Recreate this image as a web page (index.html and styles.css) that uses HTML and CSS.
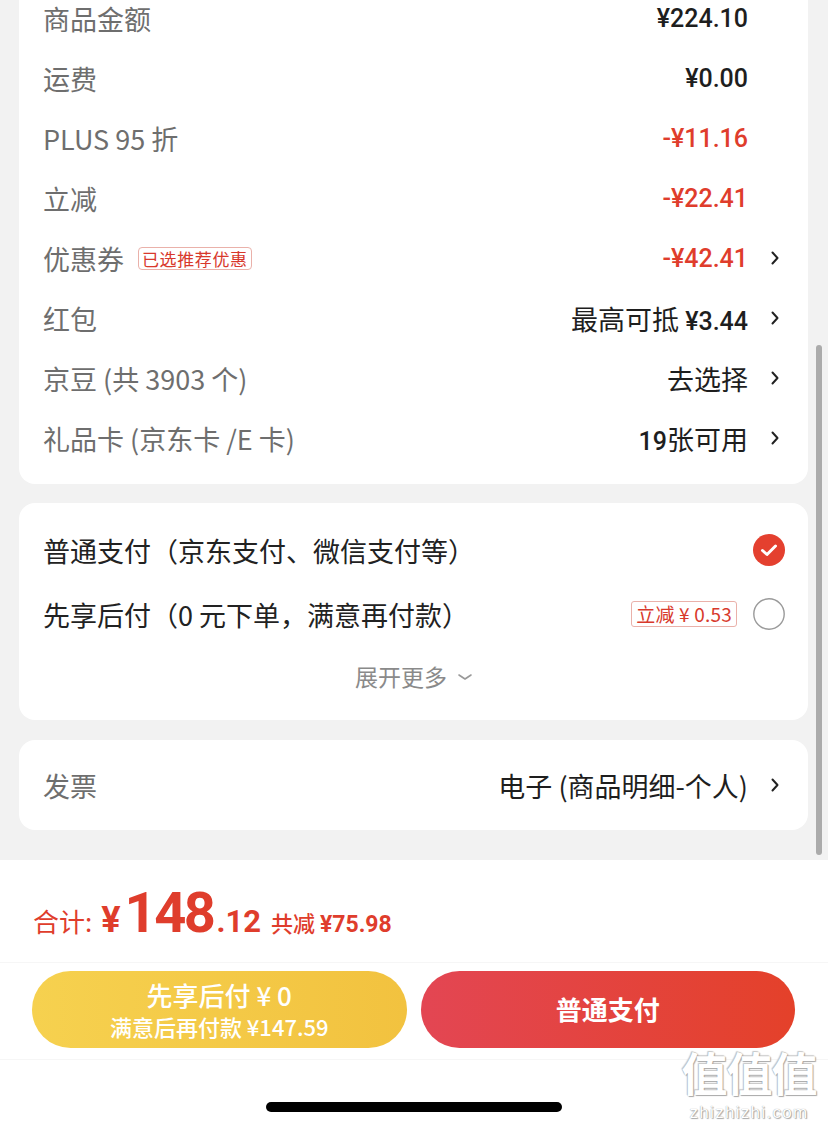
FILE: index.html
```html
<!DOCTYPE html>
<html lang="zh-CN">
<head>
<meta charset="utf-8">
<title>结算</title>
<link rel="stylesheet" href="styles.css">
</head>
<body>
<div class="screen">
  <div class="scroll">
    <section class="card card-price">
      <div class="row"><span class="label">商品金额</span><span class="value">¥224.10</span><span class="chev none"></span></div>
      <div class="row"><span class="label">运费</span><span class="value">¥0.00</span><span class="chev none"></span></div>
      <div class="row"><span class="label">PLUS 95 折</span><span class="value red">-¥11.16</span><span class="chev none"></span></div>
      <div class="row"><span class="label">立减</span><span class="value red">-¥22.41</span><span class="chev none"></span></div>
      <div class="row"><span class="label">优惠券<span class="tag">已选推荐优惠</span></span><span class="value red">-¥42.41</span><span class="chev"><svg viewBox="0 0 10 16" width="10" height="16"><path d="M2.5 2.5 L7.5 8 L2.5 13.5" fill="none" stroke="#222" stroke-width="2" stroke-linecap="round" stroke-linejoin="round"/></svg></span></div>
      <div class="row"><span class="label">红包</span><span class="value cn">最高可抵 <b class="num">¥3.44</b></span><span class="chev"><svg viewBox="0 0 10 16" width="10" height="16"><path d="M2.5 2.5 L7.5 8 L2.5 13.5" fill="none" stroke="#222" stroke-width="2" stroke-linecap="round" stroke-linejoin="round"/></svg></span></div>
      <div class="row"><span class="label">京豆 (共 3903 个)</span><span class="value cn">去选择</span><span class="chev"><svg viewBox="0 0 10 16" width="10" height="16"><path d="M2.5 2.5 L7.5 8 L2.5 13.5" fill="none" stroke="#222" stroke-width="2" stroke-linecap="round" stroke-linejoin="round"/></svg></span></div>
      <div class="row"><span class="label">礼品卡 (京东卡 /E 卡)</span><span class="value cn"><b class="num">19</b>张可用</span><span class="chev"><svg viewBox="0 0 10 16" width="10" height="16"><path d="M2.5 2.5 L7.5 8 L2.5 13.5" fill="none" stroke="#222" stroke-width="2" stroke-linecap="round" stroke-linejoin="round"/></svg></span></div>
    </section>

    <section class="card card-pay">
      <div class="pay-row">
        <span class="pay-name">普通支付（京东支付、微信支付等）</span>
        <span class="radio checked"><svg viewBox="0 0 32 32" width="32" height="32"><circle cx="16" cy="16" r="16" fill="#e4402f"/><path d="M9.5 16.5 L14 20.5 L22.5 12" fill="none" stroke="#fff" stroke-width="3" stroke-linecap="round" stroke-linejoin="round"/></svg></span>
      </div>
      <div class="pay-row">
        <span class="pay-name">先享后付（0 元下单，满意再付款）</span>
        <span class="pay-tag">立减 ¥ 0.53</span>
        <span class="radio"><svg viewBox="0 0 32 32" width="32" height="32"><circle cx="16" cy="16" r="15.2" fill="#fff" stroke="#9a9a9a" stroke-width="1.4"/></svg></span>
      </div>
      <div class="expand">展开更多<svg viewBox="0 0 16 10" width="16" height="10"><path d="M2 3 L8 7 L14 3" fill="none" stroke="#999" stroke-width="1.6" stroke-linecap="round" stroke-linejoin="round"/></svg></div>
    </section>

    <section class="card card-invoice">
      <div class="row"><span class="label">发票</span><span class="value cn">电子 (商品明细-个人)</span><span class="chev"><svg viewBox="0 0 10 16" width="10" height="16"><path d="M2.5 2.5 L7.5 8 L2.5 13.5" fill="none" stroke="#222" stroke-width="2" stroke-linecap="round" stroke-linejoin="round"/></svg></span></div>
    </section>
  </div>

  <footer class="bottom">
    <div class="total">
      <span class="t-label">合计:</span>
      <span class="t-yen">¥</span><span class="t-int">148</span><span class="t-dec">.12</span>
      <span class="t-save">共减 <b>¥75.98</b></span>
    </div>
    <div class="buttons">
      <button class="btn btn-later"><span class="l1">先享后付 ¥ 0</span><span class="l2">满意后再付款 ¥147.59</span></button>
      <button class="btn btn-pay">普通支付</button>
    </div>
    <div class="home-area"><span class="home-bar"></span></div>
  </footer>

  <div class="scrollbar"></div>
  <div class="watermark"><span class="wm-big">值值值</span><span class="wm-small">zhizhizhi.com</span></div>
</div>
</body>
</html>
```

FILE: styles.css
```css
* { box-sizing: border-box; margin: 0; padding: 0; }
html, body { width: 828px; height: 1128px; overflow: hidden; }
body {
  background: #f2f2f2;
  font-family: "Noto Sans CJK SC", "Noto Sans", sans-serif;
  color: #222;
}
.screen { position: relative; width: 828px; height: 1128px; overflow: hidden; display: flex; flex-direction: column; }

.scroll {
  height: 860px;
  padding: 0 20px 0 19px;
  display: flex;
  flex-direction: column;
  gap: 19px;
}
.card { background: #fff; border-radius: 16px; }
.card-price { margin-top: -28px; padding: 16px 28px 16px 24px; }
.card-pay { padding: 15px 23px 14px 24px; margin-bottom: 1px; }
.card-invoice { padding: 15px 28px 15px 24px; }

.row { height: 60px; display: flex; align-items: center; }
.label {
  flex: 1;
  font-size: 27px;
  color: #6e6e6e;
  display: flex;
  align-items: center;
  white-space: nowrap;
}
.tag {
  margin-left: 14px;
  font-size: 17px;
  line-height: 21px;
  padding: 0 3px;
  color: #d8392c;
  border: 1px solid #eab1aa;
  border-radius: 4px;
  letter-spacing: 0.6px;
}
.value {
  font-family: Roboto, "Noto Sans CJK SC", sans-serif;
  font-size: 25px;
  font-weight: 500;
  color: #1e1e1e;
  white-space: nowrap;
}
.value.red { color: #df3d2c; }
.value.cn { font-family: "Noto Sans CJK SC", sans-serif; font-weight: 400; font-size: 27px; }
.value .num { font-family: Roboto, sans-serif; font-weight: 500; font-size: 25px; }
.chev { width: 10px; height: 16px; margin-left: 22px; display: flex; }
.chev.none { visibility: hidden; }

.pay-row { height: 64px; display: flex; align-items: center; }
.pay-name { flex: 1; font-size: 27px; color: #222; white-space: nowrap; }
.pay-tag {
  font-size: 19px;
  line-height: 24px;
  padding: 0 4px;
  color: #d8392c;
  border: 1px solid #eab1aa;
  border-radius: 3px;
  margin-right: 16px;
  letter-spacing: 0.2px;
}
.radio { width: 32px; height: 32px; display: flex; }
.expand {
  height: 60px;
  display: flex;
  align-items: center;
  justify-content: center;
  gap: 10px;
  font-size: 23px;
  color: #8a8a8a;
}
.expand svg { margin-top: 2px; }

.bottom {
  height: 268px;
  background: #fff;
  display: flex;
  flex-direction: column;
}
.total {
  height: 103px;
  display: flex;
  align-items: baseline;
  padding: 23px 0 0 33px;
  color: #df3d2c;
  border-bottom: 1px solid #f6f6f6;
}
.t-label { font-size: 26px; margin-right: 9px; }
.t-yen { font-family: Roboto, sans-serif; font-weight: 700; font-size: 36px; margin-right: 4px; }
.t-int { font-family: Roboto, sans-serif; font-weight: 700; font-size: 56px; letter-spacing: -2.5px; line-height: 60px; }
.t-dec { font-family: Roboto, sans-serif; font-weight: 700; font-size: 31px; margin-left: 3px; }
.t-save { font-size: 22px; margin-left: 10px; font-weight: 500; }
.t-save b { font-family: Roboto, sans-serif; font-weight: 700; font-size: 23px; }

.buttons {
  height: 97px;
  display: flex;
  gap: 14px;
  padding: 8px 33px 0 32px;
  border-bottom: 1px solid #f6f6f6;
}
.btn {
  flex: 1;
  height: 77px;
  border: none;
  border-radius: 39px;
  color: #fff;
  font-family: "Noto Sans CJK SC", sans-serif;
  display: flex;
  flex-direction: column;
  align-items: center;
  justify-content: center;
}
.btn-later { background: linear-gradient(90deg, #f6d14f, #f2c23f); }
.btn-later .l1 { font-size: 26px; line-height: 32px; font-weight: 500; }
.btn-later .l2 { font-size: 22px; line-height: 30px; font-weight: 500; }
.btn-pay {
  background: linear-gradient(90deg, #e34653, #e4412a);
  font-size: 26px;
  font-weight: 700;
  padding-bottom: 2px;
}
.home-area { flex: 1; display: flex; justify-content: center; padding-top: 42px; padding-right: 1px; }
.home-bar { width: 296px; height: 10px; border-radius: 5px; background: #000; }

.scrollbar {
  position: absolute;
  left: 816px;
  top: 345px;
  width: 6px;
  height: 510px;
  border-radius: 3px;
  background: #ababab;
}
.watermark {
  position: absolute;
  left: 676px;
  top: 1046px;
  width: 146px;
  display: flex;
  flex-direction: column;
  align-items: center;
  gap: 8px;
  pointer-events: none;
}
.wm-big {
  font-size: 46px;
  line-height: 50px;
  font-weight: 700;
  color: #fff;
  text-shadow: 0 0 1px #999, 1px 1px 1px #aaa, -1px -1px 1px #ccc;
  letter-spacing: -1px;
}
.wm-small {
  font-family: "Liberation Sans", sans-serif;
  font-size: 17px;
  line-height: 17px;
  letter-spacing: 1.3px;
  color: #fff;
  text-shadow: 0 0 1px #888, 1px 1px 1px #aaa;
}
```
